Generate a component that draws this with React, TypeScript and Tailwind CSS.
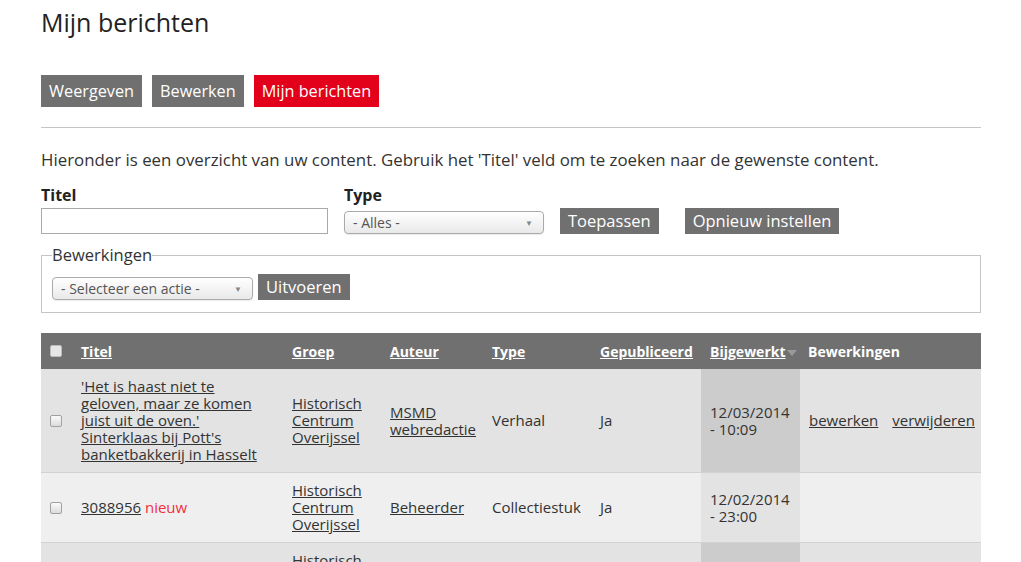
import React from 'react';

const font = { fontFamily: '"Open Sans", "Noto Sans", sans-serif' };

type Row = {
  title: string;
  isNew?: boolean;
  group: string;
  author: string;
  type: string;
  published: string;
  date: string;
  time: string;
  actions: boolean;
};

const rows: Row[] = [
  {
    title: "'Het is haast niet te geloven, maar ze komen juist uit de oven.' Sinterklaas bij Pott's banketbakkerij in Hasselt",
    group: 'Historisch Centrum Overijssel',
    author: 'MSMD webredactie',
    type: 'Verhaal',
    published: 'Ja',
    date: '12/03/2014',
    time: '- 10:09',
    actions: true,
  },
  {
    title: '3088956',
    isNew: true,
    group: 'Historisch Centrum Overijssel',
    author: 'Beheerder',
    type: 'Collectiestuk',
    published: 'Ja',
    date: '12/02/2014',
    time: '- 23:00',
    actions: false,
  },
  {
    title: '3088955',
    isNew: true,
    group: 'Historisch Centrum Overijssel',
    author: 'Beheerder',
    type: 'Collectiestuk',
    published: 'Ja',
    date: '12/02/2014',
    time: '- 23:00',
    actions: false,
  },
];

// ── Small pieces ──────────────────────────────────────────────────────────────
const GrayButton = ({ children, className = '' }: { children: React.ReactNode; className?: string }) => (
  <button className={`bg-[#707070] text-white text-[16.5px] leading-none px-[8px] ${className}`}>{children}</button>
);

const Select = ({ label, className = '' }: { label: string; className?: string }) => (
  <div
    className={`flex items-center justify-between rounded-[4px] border border-[#aaaaaa] bg-gradient-to-b from-white to-[#e9e9e9] pl-[8px] pr-[10px] text-[14px] text-[#555] shadow-[0_1px_1px_rgba(0,0,0,0.08)] ${className}`}
  >
    <span>{label}</span>
    <span className="text-[8px] text-[#888]">▼</span>
  </div>
);

const Checkbox = ({ header = false }: { header?: boolean }) => (
  <span
    className={`block w-[12px] h-[12px] rounded-[2px] border ${
      header ? 'border-[#bbb] bg-[#e6e6e6]' : 'border-[#a0a0a0] bg-gradient-to-b from-[#fafafa] to-[#dcdcdc]'
    }`}
  />
);

export default function App() {
  return (
    <div className="bg-white text-[#333] min-h-[562px] px-[41px] pr-[40px]" style={font}>
      <h1 className="text-[25px] leading-none pt-[10px] text-[#222]">Mijn berichten</h1>

      {/* Tabs */}
      <div className="flex gap-[10px] mt-[40px]">
        <span className="bg-[#707070] text-white text-[16.25px] h-[32px] flex items-center px-[8px]">Weergeven</span>
        <span className="bg-[#707070] text-white text-[16.25px] h-[32px] flex items-center px-[8px]">Bewerken</span>
        <span className="bg-[#e2001a] text-white text-[16.25px] h-[32px] flex items-center px-[8px]">Mijn berichten</span>
      </div>

      <div className="h-px bg-[#c4c4c4] mt-[20px]" />

      <p className="text-[16.85px] mt-[21px] leading-[22px]">
        Hieronder is een overzicht van uw content. Gebruik het 'Titel' veld om te zoeken naar de gewenste content.
      </p>

      {/* Filters */}
      <div className="flex items-end mt-[13px]">
        <div className="w-[287px]">
          <div className="font-bold text-[16px] leading-[22px] text-[#222]">Titel</div>
          <div className="h-[26px] border border-[#aaaaaa] mt-[2px]" />
        </div>
        <div className="ml-[16px] w-[200px]">
          <div className="font-bold text-[16px] leading-[22px] text-[#222]">Type</div>
          <Select label="- Alles -" className="h-[23px] mt-[5px]" />
        </div>
        <GrayButton className="ml-[16px] h-[26px]">Toepassen</GrayButton>
        <GrayButton className="ml-[26px] h-[26px]">Opnieuw instellen</GrayButton>
      </div>

      {/* Bulk operations */}
      <fieldset className="border border-[#c4c4c4] mt-[11px] px-[10px] h-[68px]">
        <legend className="text-[16.5px] leading-[20px] px-0">Bewerkingen</legend>
        <div className="flex items-end mt-[9px]">
          <Select label="- Selecteer een actie -" className="w-[201px] h-[23px]" />
          <GrayButton className="ml-[5px] h-[26px]">Uitvoeren</GrayButton>
        </div>
      </fieldset>

      {/* Table */}
      <table className="w-[940px] table-fixed mt-[20px] text-[15px] leading-[17px] border-collapse">
        <colgroup>
          <col className="w-[31px]" />
          <col className="w-[212px]" />
          <col className="w-[98px]" />
          <col className="w-[102px]" />
          <col className="w-[108px]" />
          <col className="w-[109px]" />
          <col className="w-[99px]" />
          <col className="w-[181px]" />
        </colgroup>
        <thead>
          <tr className="bg-[#707070] text-white text-[14px] h-[36px] text-left">
            <th className="pl-[9px]"><Checkbox header /></th>
            <th className="pl-[9px] font-bold"><span className="underline">Titel</span></th>
            <th className="pl-[8px] font-bold"><span className="underline">Groep</span></th>
            <th className="pl-[8px] font-bold"><span className="underline">Auteur</span></th>
            <th className="pl-[8px] font-bold"><span className="underline">Type</span></th>
            <th className="pl-[8px] font-bold"><span className="underline">Gepubliceerd</span></th>
            <th className="pl-[9px] font-bold whitespace-nowrap">
              <span className="underline">Bijgewerkt</span>
              <span className="inline-block w-0 h-0 ml-[1px] align-middle border-x-[5px] border-x-transparent border-t-[6px] border-t-[#9a9a9a]" />
            </th>
            <th className="pl-[8px] font-bold">Bewerkingen</th>
          </tr>
        </thead>
        <tbody>
          {rows.map((r, i) => {
            const odd = i % 2 === 0;
            return (
              <tr key={i} className={`${odd ? 'bg-[#e3e3e3]' : 'bg-[#efefef]'} border-b border-[#d2d2d2]`}>
                <td className="pl-[9px] py-[9px] align-middle"><Checkbox /></td>
                <td className="pl-[9px] pr-[8px] py-[9px] align-middle">
                  <a className="underline">{r.title}</a>
                  {r.isNew && <span className="text-[#f2303e]"> nieuw</span>}
                </td>
                <td className="pl-[8px] py-[9px] align-middle"><a className="underline">{r.group}</a></td>
                <td className="pl-[8px] py-[9px] align-middle"><a className="underline">{r.author}</a></td>
                <td className="pl-[8px] py-[9px] align-middle">{r.type}</td>
                <td className="pl-[8px] py-[9px] align-middle">{r.published}</td>
                <td className={`pl-[9px] py-[9px] align-middle ${odd ? 'bg-[#cccccc]' : 'bg-[#e3e3e3]'}`}>
                  <div>{r.date}</div>
                  <div>{r.time}</div>
                </td>
                <td className="pl-[9px] py-[9px] align-middle whitespace-nowrap">
                  {r.actions && (
                    <>
                      <a className="underline mr-[14px]">bewerken</a>
                      <a className="underline">verwijderen</a>
                    </>
                  )}
                </td>
              </tr>
            );
          })}
        </tbody>
      </table>
    </div>
  );
}
